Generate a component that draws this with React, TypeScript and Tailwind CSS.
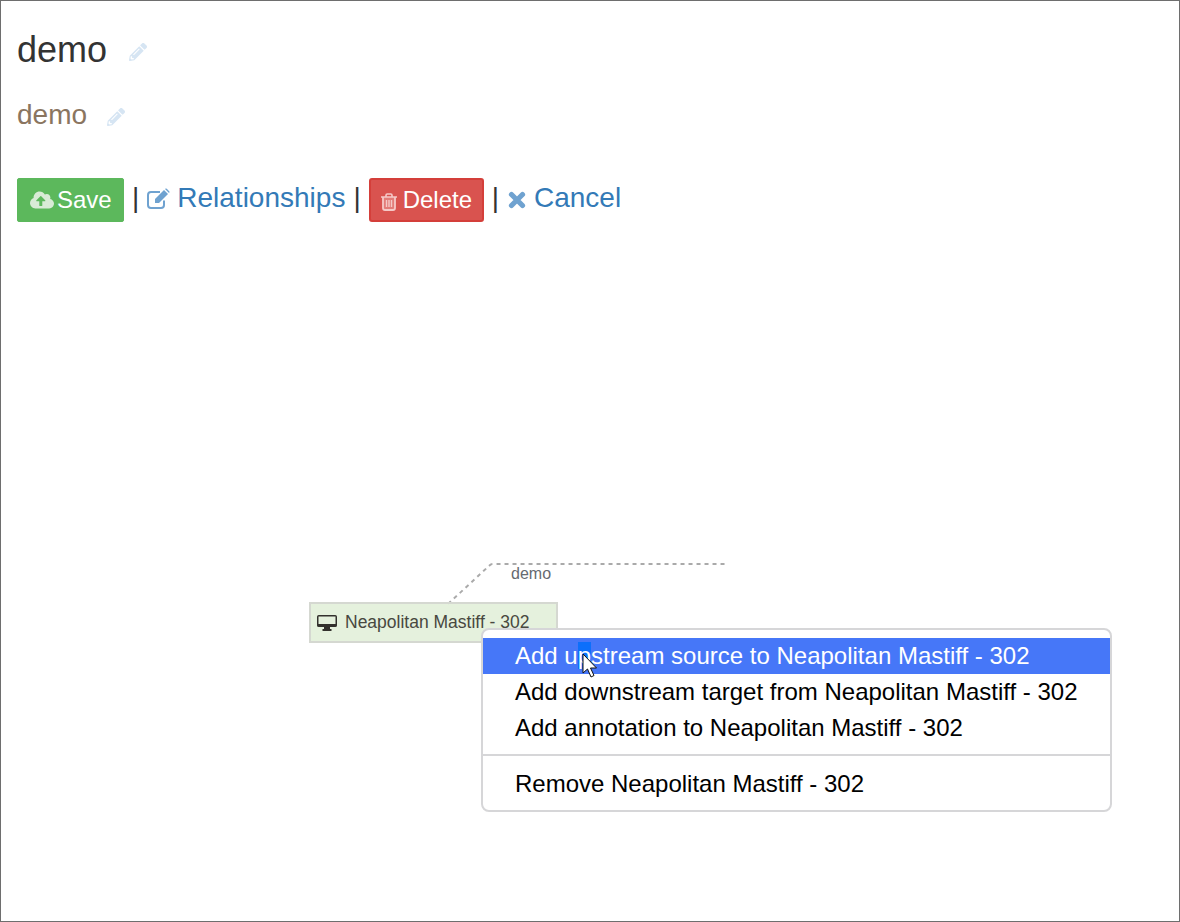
import React from "react";
import { FaPencilAlt, FaCloudUploadAlt } from "react-icons/fa";

const MenuItem = ({ children, active }: { children: React.ReactNode; active?: boolean }) => (
  <div className={"h-9 pl-8 leading-9 text-[24px] whitespace-nowrap " + (active ? "bg-[#4677f8] text-white" : "text-black")}>{children}</div>
);

const EditIcon = () => (
  <svg width="24" height="22" viewBox="0 0 24 22" className="mr-[6px] mt-[2px]">
    <path d="M17 12.5 V17 a3 3 0 0 1 -3 3 H4 a3 3 0 0 1 -3 -3 V7 a3 3 0 0 1 3 -3 H13" fill="none" stroke="#6fa2d0" strokeWidth="2" />
    <path d="M8 11 L17 2 L21 6 L12 15 L8 15 Z" fill="#6fa2d0" />
    <path d="M18.2 .8 Q19 0 19.8 .8 L22.2 3.2 Q23 4 22.2 4.8 L22 5 L18 1 Z" fill="#6fa2d0" />
  </svg>
);

const TrashIcon = () => (
  <svg width="16" height="18" viewBox="0 0 16 18" className="mr-[6px] mt-[3px]">
    <path d="M0 4 H16 M5 4 V2.2 Q5 1 6.2 1 H9.8 Q11 1 11 2.2 V4" fill="none" stroke="#f5c9c7" strokeWidth="1.6" />
    <path d="M2 4 V15 Q2 17 4 17 H12 Q14 17 14 15 V4" fill="#f5c9c7" fillOpacity="0.35" stroke="#f5c9c7" strokeWidth="1.8" />
    <path d="M5.5 7 V14 M8 7 V14 M10.5 7 V14" stroke="#f5c9c7" strokeWidth="1.4" />
  </svg>
);

const CrossIcon = () => (
  <svg width="18" height="18" viewBox="0 0 18 18" className="mr-[8px] mt-[3px]">
    <path d="M3.5 3.5 L14.5 14.5 M14.5 3.5 L3.5 14.5" stroke="#6fa2d0" strokeWidth="5.2" strokeLinecap="round" />
  </svg>
);

const DesktopIcon = () => (
  <svg width="20" height="16" viewBox="0 0 20 16" className="ml-[6px]">
    <path d="M1.8 0 H18.2 Q20 0 20 1.8 V10.5 Q20 12 18.2 12 H1.8 Q0 12 0 10.5 V1.8 Q0 0 1.8 0 Z M1.5 1.5 V9 H18.5 V1.5 Z" fill="#33312d" fillRule="evenodd" />
    <path d="M7 12 H13 V14 H14.5 V16 H5.5 V14 H7 Z" fill="#33312d" />
  </svg>
);

export default function App() {
  return (
    <div className="relative w-[1180px] h-[922px] bg-white border border-[#6e6e6e] overflow-hidden font-['Liberation_Sans',Arial,sans-serif] text-[#333333]">
      <div className="pl-4 pt-[29px]">
        <div className="flex items-center h-10">
          <h1 className="text-[36px] leading-10">demo</h1>
          <FaPencilAlt className="ml-[22px] mt-1 text-[#d6e5f3] text-[18px]" />
        </div>
        <div className="flex items-center h-8 mt-[29px]">
          <h2 className="text-[28px] leading-8 text-[#8a7560]">demo</h2>
          <FaPencilAlt className="ml-[20px] mt-[3px] text-[#d6e5f3] text-[18px]" />
        </div>
        <div className="flex items-center h-[44px] mt-[47px] text-[28px]">
          <button className="flex items-center h-[44px] w-[107px] pl-[12px] bg-[#5cb85c] border border-[#5cb85c] rounded-[2px] text-white text-[24px]">
            <FaCloudUploadAlt className="text-[24px] text-[#d8ebd6] mr-[3px]" />
            Save
          </button>
          <span className="ml-[8px] -mt-1">|</span>
          <a className="flex items-center ml-[8px] -mt-1 text-[#337ab7]">
            <EditIcon />
            Relationships
          </a>
          <span className="ml-[8px] -mt-1">|</span>
          <button className="flex items-center h-[44px] w-[115px] ml-[8px] pl-[10px] bg-[#d9534f] border-2 border-[#d43f3a] rounded-[3px] text-white text-[24px]">
            <TrashIcon />
            Delete
          </button>
          <span className="ml-[8px] -mt-1">|</span>
          <a className="flex items-center ml-[9px] -mt-1 text-[#337ab7]">
            <CrossIcon />
            Cancel
          </a>
        </div>
      </div>

      {/* diagram canvas */}
      <svg className="absolute left-0 top-0" width="1180" height="922">
        <path d="M447 603 L489 564 Q490 563 492 563 L724 563" fill="none" stroke="#aaaaaa" strokeWidth="2" strokeDasharray="4 4" />
      </svg>
      <div className="absolute left-[510px] top-[564px] text-[16px] leading-[18px] text-[#666a70]">demo</div>
      <div className="absolute left-[308px] top-[601px] w-[249px] h-[41px] flex items-center bg-[#e2f0d9]/90 border-2 border-[#d5d8d1] text-[17.5px] text-[#484840]">
        <DesktopIcon />
        <span className="ml-[8px] whitespace-nowrap">Neapolitan Mastiff - 302</span>
      </div>

      {/* context menu */}
      <div className="absolute left-[480px] top-[627px] w-[631px] h-[184px] bg-white border-2 border-[#d6d6d8] rounded-[8px] pt-2">
        <MenuItem active>
          Add u<span className="bg-[#0c6ffb]">p</span>stream source to Neapolitan Mastiff - 302
        </MenuItem>
        <MenuItem>Add downstream target from Neapolitan Mastiff - 302</MenuItem>
        <MenuItem>Add annotation to Neapolitan Mastiff - 302</MenuItem>
        <div className="h-[2px] bg-[#d6d6d8] mt-2 mb-2.5" />
        <MenuItem>Remove Neapolitan Mastiff - 302</MenuItem>
      </div>

      {/* mouse cursor */}
      <svg className="absolute left-[581px] top-[652px]" width="18" height="28" viewBox="0 0 18 28">
        <path d="M1 1 L1 20 L5.5 16 L9 24 L12 22.5 L8.5 15 L14.5 15 Z" fill="#fff" stroke="#111" strokeWidth="1" />
      </svg>
    </div>
  );
}
